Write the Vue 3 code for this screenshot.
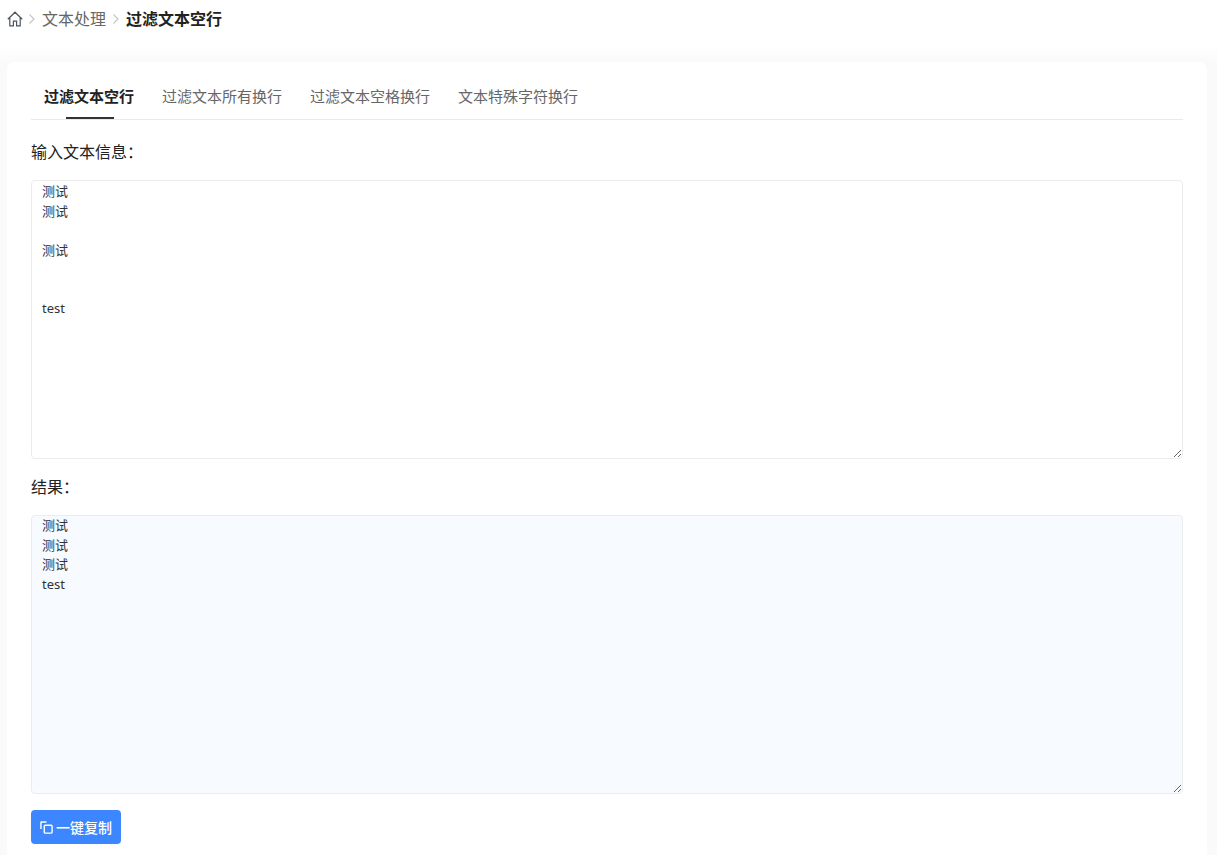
<script setup>
import { ref } from 'vue';

const tabs = ['过滤文本空行', '过滤文本所有换行', '过滤文本空格换行', '文本特殊字符换行'];
const activeTab = ref(0);
const inputText = ref('测试\n测试\n\n测试\n\n\ntest');
const resultText = ref('测试\n测试\n测试\ntest');
</script>

<template>
  <div class="page">
    <header class="crumbs">
      <svg class="home-icon" viewBox="0 0 16 16" fill="none" stroke="#4b5563" stroke-width="1.2">
        <path d="M.8 8.2 8 1.2l7.2 7M2.8 6.6v8.2h3.6v-4.6h3.2v4.6h3.6V6.6" />
      </svg>
      <svg class="sep" viewBox="0 0 8 12" fill="none" stroke="#c4c4c4" stroke-width="1.1"><path d="M1.5 1.5 6 6l-4.5 4.5" /></svg>
      <span class="crumb">文本处理</span>
      <svg class="sep" viewBox="0 0 8 12" fill="none" stroke="#c4c4c4" stroke-width="1.1"><path d="M1.5 1.5 6 6l-4.5 4.5" /></svg>
      <span class="crumb-current">过滤文本空行</span>
    </header>

    <main class="card">
      <nav class="tabs">
        <div
          v-for="(tab, i) in tabs"
          :key="tab"
          class="tab"
          :class="{ active: activeTab === i }"
          @click="activeTab = i"
        >
          {{ tab }}
        </div>
      </nav>

      <div class="label first">输入文本信息：</div>
      <textarea v-model="inputText" class="box" spellcheck="false"></textarea>

      <div class="label">结果：</div>
      <textarea v-model="resultText" class="box result" readonly spellcheck="false"></textarea>

      <button class="copy-btn">
        <svg class="copy-icon" viewBox="0 0 14 14" fill="none" stroke="#fff" stroke-width="1.5">
          <path d="M1 8.5V1.6q0-.6.6-.6H7" />
          <rect x="4.6" y="4.6" width="8.4" height="8.4" rx="1" />
        </svg>
        一键复制
      </button>
    </main>
  </div>
</template>

<style scoped>
.page {
  height: 855px;
  background: linear-gradient(#fff 46px, #fafafa 62px);
  font-family: "Noto Sans", "Noto Sans CJK SC", sans-serif;
  color: #222;
  overflow: hidden;
}

.crumbs {
  height: 50px;
  box-sizing: border-box;
  padding: 8px 0 0 7px;
  display: flex;
  align-items: flex-start;
  gap: 6px;
}

.home-icon {
  width: 16px;
  height: 16px;
  margin-top: 3px;
  margin-right: -1px;
}

.sep {
  width: 8px;
  height: 12px;
  margin-top: 5px;
}

.crumb {
  font-size: 16px;
  line-height: 22px;
  color: #666;
}

.crumb-current {
  font-size: 16px;
  line-height: 22px;
  font-weight: 700;
  color: #222;
}

.card {
  margin: 12px 10px 0 7px;
  padding: 0 24px 24px;
  background: #fff;
  border-radius: 8px;
}

.tabs {
  display: flex;
  height: 58px;
  border-bottom: 1px solid #eaeaea;
  box-sizing: border-box;
  padding-left: 13px;
  gap: 28px;
}

.tab {
  position: relative;
  font-size: 15px;
  line-height: 20px;
  padding-top: 24px;
  color: #666;
  cursor: pointer;
}

.tab.active {
  font-weight: 700;
  color: #222;
}

.tab.active::after {
  content: "";
  position: absolute;
  left: 50%;
  bottom: 0;
  width: 48px;
  height: 2px;
  margin-left: -23px;
  background: #333;
}

.label {
  font-size: 16px;
  line-height: 20px;
  margin-top: 18px;
  margin-bottom: 18px;
  color: #222;
}

.label.first {
  margin-top: 22px;
}

.box {
  display: block;
  width: 100%;
  height: 279px;
  box-sizing: border-box;
  border: 1px solid #ececec;
  border-radius: 4px;
  padding: 1px 10px 0;
  font-family: inherit;
  font-size: 13px;
  line-height: 19.5px;
  color: #333;
  background: #fff;
  outline: none;
}

.box.result {
  padding-top: 0;
  background: #f7faff;
}

.copy-btn {
  display: flex;
  align-items: center;
  gap: 3px;
  margin-top: 16px;
  height: 34px;
  width: 90px;
  padding: 0 0 0 9px;
  border: none;
  border-radius: 4px;
  background: #3c87ff;
  color: #fff;
  font-family: inherit;
  font-size: 14px;
  font-weight: 500;
  white-space: nowrap;
  cursor: pointer;
}

.copy-icon {
  width: 13px;
  height: 13px;
  flex-shrink: 0;
}
</style>
